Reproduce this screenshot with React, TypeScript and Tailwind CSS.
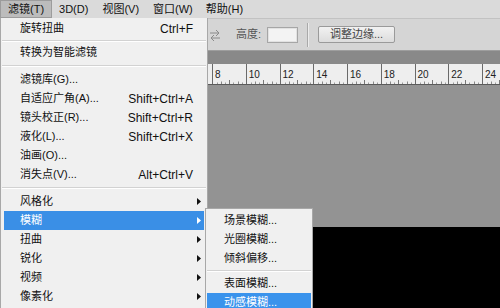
import React from "react";

type Item =
  | { type: "item"; label: string; shortcut?: string; arrow?: boolean; active?: boolean }
  | { type: "sep"; h: number };

const mainItems: Item[] = [
  { type: "item", label: "旋转扭曲", shortcut: "Ctrl+F" },
  { type: "sep", h: 5 },
  { type: "item", label: "转换为智能滤镜" },
  { type: "sep", h: 8 },
  { type: "item", label: "滤镜库(G)..." },
  { type: "item", label: "自适应广角(A)...", shortcut: "Shift+Ctrl+A" },
  { type: "item", label: "镜头校正(R)...", shortcut: "Shift+Ctrl+R" },
  { type: "item", label: "液化(L)...", shortcut: "Shift+Ctrl+X" },
  { type: "item", label: "油画(O)..." },
  { type: "item", label: "消失点(V)...", shortcut: "Alt+Ctrl+V" },
  { type: "sep", h: 8 },
  { type: "item", label: "风格化", arrow: true },
  { type: "item", label: "模糊", arrow: true, active: true },
  { type: "item", label: "扭曲", arrow: true },
  { type: "item", label: "锐化", arrow: true },
  { type: "item", label: "视频", arrow: true },
  { type: "item", label: "像素化", arrow: true },
];

const subItems: Item[] = [
  { type: "item", label: "场景模糊..." },
  { type: "item", label: "光圈模糊..." },
  { type: "item", label: "倾斜偏移..." },
  { type: "sep", h: 6 },
  { type: "item", label: "表面模糊..." },
  { type: "item", label: "动感模糊...", active: true },
];

function Arrow({ white }: { white?: boolean }) {
  return (
    <svg width="4" height="7" viewBox="0 0 4 7" className="ml-[4px]">
      <polygon points="0,0 4,3.5 0,7" fill={white ? "#ffffff" : "#111111"} />
    </svg>
  );
}

function Sep({ h, inset }: { h: number; inset: string }) {
  return (
    <div className={`flex flex-col justify-center ${inset}`} style={{ height: h }}>
      <div className="h-px bg-[#d2d2d2]" />
      <div className="h-px bg-white" />
    </div>
  );
}

function RulerSegment({ n }: { n: number }) {
  return (
    <div className="flex h-full w-[33.75px] shrink-0 flex-col border-l border-[#6a6a6a]">
      <div className="h-[5px]" />
      <div className="h-[11px] pl-[2px] text-[10px] leading-[11px] text-[#222]">{n}</div>
      <svg width="33" height="4" viewBox="0 0 33 4" className="block">
        <line x1="16.5" y1="0" x2="16.5" y2="4" stroke="#777" strokeWidth="1" />
        <line x1="8.5" y1="1.5" x2="8.5" y2="4" stroke="#888" strokeWidth="1" />
        <line x1="25.5" y1="1.5" x2="25.5" y2="4" stroke="#888" strokeWidth="1" />
        <line x1="4.5" y1="2.5" x2="4.5" y2="4" stroke="#999" strokeWidth="1" />
        <line x1="12.5" y1="2.5" x2="12.5" y2="4" stroke="#999" strokeWidth="1" />
        <line x1="20.5" y1="2.5" x2="20.5" y2="4" stroke="#999" strokeWidth="1" />
        <line x1="29.5" y1="2.5" x2="29.5" y2="4" stroke="#999" strokeWidth="1" />
      </svg>
    </div>
  );
}

export default function App() {
  return (
    <div className="relative h-[308px] w-[500px] overflow-hidden bg-[#939393] font-['Liberation_Sans','Noto_Sans_CJK_SC',sans-serif] text-[11px] text-[#111]">
      {/* background application */}
      <div className="flex h-full flex-col">
        {/* menu bar */}
        <div className="flex h-[18px] shrink-0 items-center bg-[#dadada]">
          <div className="flex h-full items-center border border-[#9c9c9c] bg-[#bcbcbc] px-[7px]">滤镜(T)</div>
          <div className="px-[7px]">3D(D)</div>
          <div className="px-[7px]">视图(V)</div>
          <div className="px-[7px]">窗口(W)</div>
          <div className="px-[6px]">帮助(H)</div>
        </div>
        {/* options bar */}
        <div className="flex h-[32px] shrink-0 items-center border-t border-[#c2c2c2] bg-[#d5d5d5] pl-[208px]">
          <svg width="14" height="14" viewBox="0 0 14 14" className="shrink-0">
            <path d="M2 5 H11 M8 2 L11 5 L8 8" stroke="#8a8a8a" strokeWidth="1" fill="none" />
            <path d="M12 10 H3 M6 7 L3 10 L6 13" stroke="#8a8a8a" strokeWidth="1" fill="none" />
          </svg>
          <div className="ml-[14px] text-[#555]">高度:</div>
          <div className="ml-[6px] h-[16px] w-[31px] border border-[#a6a6a6] bg-[#f3f3f3] shadow-[inset_0_0_0_1px_#e2e2e2]" />
          <div className="ml-[9px] flex h-[24px]">
            <div className="w-px bg-[#a9a9a9]" />
            <div className="w-px bg-[#ececec]" />
          </div>
          <div className="ml-[9px] flex h-[17px] w-[77px] items-center justify-center rounded-[2px] border border-[#9a9a9a] bg-gradient-to-b from-[#f2f2f2] to-[#dcdcdc] text-[#444]">
            调整边缘...
          </div>
        </div>
        {/* document tab band */}
        <div className="h-[14px] shrink-0 border-t border-[#9e9e9e] bg-[#898989]" />
        {/* ruler */}
        <div className="flex h-[21px] shrink-0 border-b border-[#5a5a5a] bg-[#eeeeee] pl-[212px]">
          {[8, 10, 12, 14, 16, 18, 20, 22, 24].map((n) => (
            <RulerSegment key={n} n={n} />
          ))}
        </div>
        {/* canvas */}
        <div className="h-[142px] shrink-0 bg-[#939393]" />
        <div className="flex-1 bg-black" />
      </div>

      {/* main dropdown menu */}
      <div className="absolute left-0 top-[18px] bottom-0 w-[208px] border-l border-r border-[#a8a8a8] bg-[#f0f0f0] pt-[1px]">
        {mainItems.map((it, i) =>
          it.type === "sep" ? (
            <Sep key={i} h={it.h} inset="mx-[1px]" />
          ) : (
            <div
              key={i}
              className={`mx-[3px] flex h-[19px] items-center pl-[16px] ${
                it.active ? "bg-[#3a8fe6] text-white" : ""
              }`}
            >
              <span className="flex-1 whitespace-nowrap">{it.label}</span>
              {it.shortcut && (
                <span className="whitespace-nowrap text-[12px]">{it.shortcut}</span>
              )}
              <span className="flex w-[11px] items-center">
                {it.arrow && <Arrow white={it.active} />}
              </span>
            </div>
          )
        )}
      </div>

      {/* submenu */}
      <div className="absolute left-[205px] top-[208px] h-[110px] w-[108px] border border-[#a8a8a8] bg-[#f0f0f0] pt-[2px]">
        {subItems.map((it, i) =>
          it.type === "sep" ? (
            <Sep key={i} h={it.h} inset="mx-[1px]" />
          ) : (
            <div
              key={i}
              className={`mx-[1px] flex h-[19px] items-center pl-[17px] whitespace-nowrap ${
                it.active ? "bg-[#3a93ec] text-white" : ""
              }`}
            >
              {it.label}
            </div>
          )
        )}
      </div>
    </div>
  );
}
